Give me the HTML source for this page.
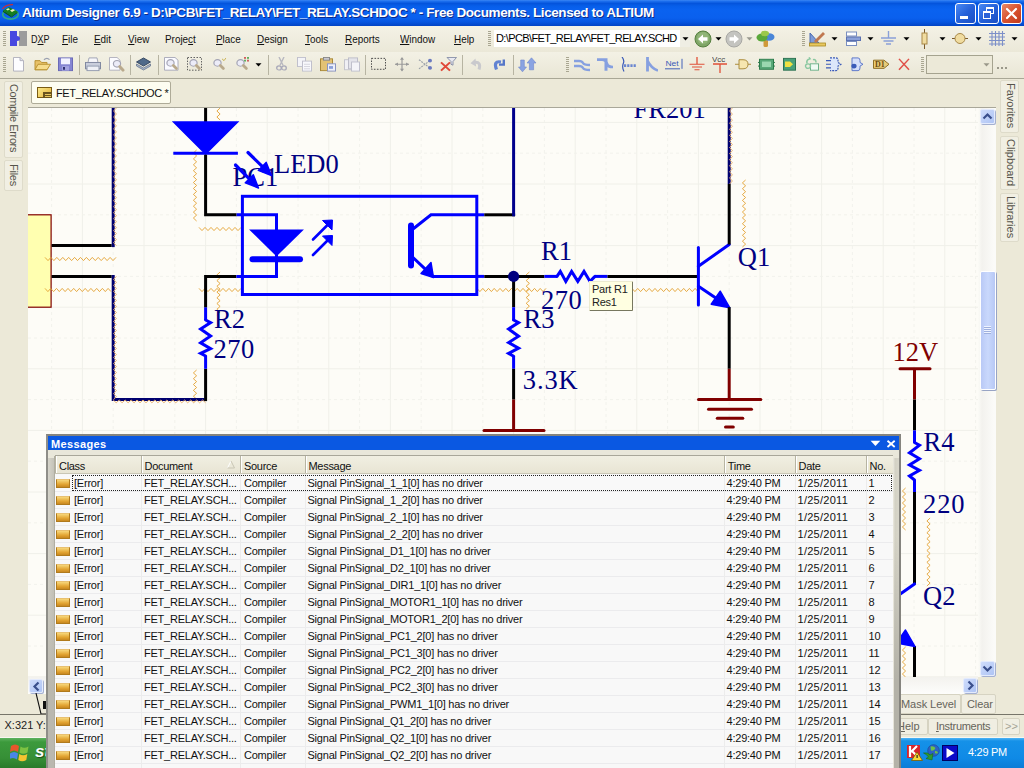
<!DOCTYPE html>
<html>
<head>
<meta charset="utf-8">
<title>Altium Designer</title>
<style>
*{box-sizing:border-box;margin:0;padding:0}
html,body{width:1024px;height:768px;overflow:hidden;background:#ece9d8;font-family:"Liberation Sans",sans-serif;font-size:11px;color:#000}
.abs{position:absolute}
#titlebar{position:absolute;left:0;top:0;width:1024px;height:26px;background:linear-gradient(to bottom,#3a86f4 0px,#1a6cec 1.5px,#0454dc 3.5px,#075ee9 6px,#0a62f0 10px,#0a60ee 18px,#0656e0 22px,#0244c4 26px)}
#titletext{position:absolute;left:22px;top:5px;color:#fff;font-weight:bold;font-size:13.5px;letter-spacing:-0.41px;white-space:pre;text-shadow:1px 1px 0 #0a2a8a}
.tbtn{position:absolute;top:3px;width:21px;height:21px;border:1px solid #fff;border-radius:3px;background:linear-gradient(135deg,#4a8af4 0%,#2561d9 50%,#1a4fc4 100%)}
#menubar{position:absolute;left:0;top:26px;width:1024px;height:26px;background:linear-gradient(to bottom,#f4f2e6,#ebe8d8)}
.mi{position:absolute;top:6.5px;font-size:11px;white-space:pre;color:#111;transform-origin:0 0;transform:scaleX(0.9)}
.mi u{text-decoration:underline}
#toolbar{position:absolute;left:0;top:52px;width:1024px;height:26px;background:linear-gradient(to bottom,#f3f1e5,#e9e6d5)}
.grip{position:absolute;width:3px;height:16px;background:repeating-linear-gradient(to bottom,#a9a691 0,#a9a691 1px,transparent 1px,transparent 2px)}
.sep{position:absolute;width:1px;height:20px;background:#b5b2a0;top:55px}
#tabrow{position:absolute;left:0;top:78px;width:1024px;height:30px;background:#ece9d8;border-top:1px solid #a9a796}
#doctab{position:absolute;left:31px;top:81px;width:140px;height:23px;background:#fdfdf0;border:1px solid #aeab98;border-radius:2px}
#doctab span{position:absolute;left:24px;top:4.5px;font-size:11px;letter-spacing:-0.35px;white-space:pre;color:#111}
.vtab{position:absolute;background:#f1efe3;border:1px solid #dedbca;border-radius:2px}
.vtab span{position:absolute;margin-top:-1px;white-space:pre;font-size:11px;color:#55534a;transform-origin:0 0;transform:rotate(90deg)}
#sch{position:absolute;left:28px;top:108px;width:950px;height:569px;background:#fdfcf7;overflow:hidden}
#vscroll{position:absolute;left:978px;top:108px;width:18px;height:569px;background:linear-gradient(to right,#fcfcf7 0,#f3f2ee 4px,#fbfbf8 16px)}
#hscroll{position:absolute;left:28px;top:677px;width:950px;height:17px;background:linear-gradient(to bottom,#f3f2ee,#fdfdfb)}
.sbtn{position:absolute;width:15px;height:15px;border:1px solid #e4ebfd;border-radius:2px;background:linear-gradient(135deg,#cfdcfb,#aec4f4);box-shadow:1px 1px 0 #a4b0d0}
#msg{position:absolute;left:46px;top:434px;width:855px;height:340px;background:#e9e7da;border:2px solid #85847e;border-left-color:#8f8e88}
#msg .ml{position:absolute;left:0;top:22px;width:7px;height:320px;background:linear-gradient(to right,#d6d4ca,#c2c0b6)}
#msg .ml2{position:absolute;left:0;top:120px;width:7px;height:220px;background:linear-gradient(to bottom,rgba(186,184,175,0),rgba(186,184,175,1) 60%)}
#msg .mr{position:absolute;left:845px;top:22px;width:6px;height:320px;background:linear-gradient(to right,#eceae0 0,#d3d1c4 35%,#d8d6ca 100%)}
#msg .mr2{position:absolute;left:845.5px;top:100px;width:5.5px;height:240px;background:linear-gradient(to bottom,rgba(180,178,168,0),rgba(180,178,168,1) 60%)}
#msgtitle{position:absolute;left:0;top:0;width:851px;height:14px;background:#0a58e2;color:#fff;font-weight:bold;font-size:11px}
#msgtitle span{position:absolute;left:3px;top:1.5px;letter-spacing:0.35px;line-height:12px}
#list{position:absolute;left:7px;top:20px;width:838px;height:320px;background:#f8f8f8;overflow:hidden;box-shadow:0 -1px 0 #a9a79a,-1px 0 0 #b0aea2}
#lhead{position:absolute;left:0;top:0;width:838px;height:18px;background:linear-gradient(to bottom,#f1efe2,#e8e5d4);border-bottom:1px solid #c9c6b5}
.hc{position:absolute;top:0;height:17px;border-left:1px solid #b7b4a2;box-shadow:inset 1px 0 0 #fff;padding:3.5px 0 0 3px;font-size:11px;letter-spacing:-0.3px;white-space:pre;color:#111}
.row{position:absolute;left:0;width:838px;height:17px;border-bottom:1px solid #ebebed;background:#f8f8f8}
.row.alt{background:#f8f8f8}
.row.first{background:#f9f9f9}
.c{position:absolute;top:1.5px;white-space:pre;font-size:11px;letter-spacing:-0.22px;color:#111}
.c.d{letter-spacing:0.27px}
.ico{position:absolute;left:0.5px;top:4px;width:14px;height:9px;background:linear-gradient(to bottom,#f7d77a,#e3a533 60%,#c88820);border:1px solid #b07a1c;border-top-color:#e8c070}
.cl{position:absolute;top:0;width:1px;height:400px;background:#ececec}
#statusbar{position:absolute;left:0;top:715px;width:1024px;height:23px;background:#ece9d8;border-bottom:1px solid #f8f7f0}
#taskbar{position:absolute;left:0;top:738px;width:1024px;height:30px;background:linear-gradient(to bottom,#3a80f0 0,#245edb 3px,#2663e0 20px,#1c4fc0 30px)}
#tray{position:absolute;left:890px;top:738px;width:134px;height:30px;background:linear-gradient(to bottom,#4fb4f5 0,#1591e8 3px,#0f8ae6 20px,#0c7cd6 30px)}
#start{position:absolute;left:0;top:738px;width:97px;height:30px;background:linear-gradient(to bottom,#5fb25f 0,#3c9a3c 4px,#368f36 20px,#2a7a2a 30px);border-radius:0 12px 12px 0}
.pbtn{position:absolute;border:1px solid #d6d3c2;border-radius:2px;background:#f0eee2;color:#66645a;font-size:11px;white-space:pre}
</style>
</head>
<body>
<!-- TITLE BAR -->
<div id="titlebar">
  <svg class="abs" style="left:1px;top:3px" width="19" height="18" viewBox="0 0 19 18"><ellipse cx="9.5" cy="11.5" rx="7.8" ry="4.6" fill="none" stroke="#2fa98c" stroke-width="1.6"/><path d="M1.5 6 Q4 1.5 12 1.6" stroke="#c8303a" stroke-width="1.4" fill="none"/><path d="M2 7.5 L8 4 L16.5 8.5 L10.5 13 Z" fill="#17801e"/><path d="M2 7.5 L10.5 13 L10.5 14.6 L2 9 Z" fill="#0c5a14"/><path d="M10.5 13 L16.5 8.5 L16.5 10 L10.5 14.6 Z" fill="#0e6616"/><path d="M5 6.3 L7.3 5.2 L9 6.2 L6.7 7.4 Z" fill="#dff0c0"/><path d="M9 7.4 L12 6 L14 7.3 L11 8.9 Z" fill="#f0f0b8"/></svg>
  <div id="titletext">Altium Designer 6.9 - D:\PCB\FET_RELAY\FET_RELAY.SCHDOC * - Free Documents. Licensed to ALTIUM</div>
  <div class="tbtn" style="left:955px"><div class="abs" style="left:4px;top:12px;width:8px;height:3px;background:#fff"></div></div>
  <div class="tbtn" style="left:978px"><div class="abs" style="left:7px;top:3px;width:8px;height:7px;border:1px solid #fff;border-top-width:2px"></div><div class="abs" style="left:4px;top:7px;width:8px;height:8px;border:1px solid #fff;border-top-width:2px;background:#2a62d8"></div></div>
  <div class="tbtn" style="left:1001px;background:linear-gradient(135deg,#e88a6a 0%,#d9532f 50%,#c03a1c 100%)"><svg class="abs" style="left:3px;top:3px" width="13" height="13" viewBox="0 0 13 13"><path d="M2 2 L11 11 M11 2 L2 11" stroke="#fff" stroke-width="2.2" stroke-linecap="round"/></svg></div>
</div>

<!-- MENU BAR -->
<div id="menubar">
<div class="grip" style="left:3px;top:5px"></div>
<svg class="abs" style="left:10px;top:5px" width="17" height="15" viewBox="0 0 17 15"><rect x="9" y="0" width="8" height="15" fill="#9c9c9c"/><path d="M0 0 H7 V5 Q10 5 10 7.5 Q10 10 7 10 V15 H0 Z" fill="#4848e0"/></svg>
<div class="mi" style="left:30.5px;transform:scaleX(0.82)">D<u>X</u>P</div>
<div class="mi" style="left:61.5px"><u>F</u>ile</div>
<div class="mi" style="left:93.8px"><u>E</u>dit</div>
<div class="mi" style="left:128px"><u>V</u>iew</div>
<div class="mi" style="left:165.3px">Proje<u>c</u>t</div>
<div class="mi" style="left:215.5px"><u>P</u>lace</div>
<div class="mi" style="left:256.5px"><u>D</u>esign</div>
<div class="mi" style="left:304.7px"><u>T</u>ools</div>
<div class="mi" style="left:345.3px"><u>R</u>eports</div>
<div class="mi" style="left:399.5px"><u>W</u>indow</div>
<div class="mi" style="left:453.5px"><u>H</u>elp</div>
<div class="grip" style="left:488px;top:5px"></div>
<div class="abs" style="left:494px;top:4px;width:196px;height:17px;background:#fff"><span class="abs" style="left:2px;top:2px;font-size:11px;white-space:pre;letter-spacing:-0.62px" id="pathtxt">D:\PCB\FET_RELAY\FET_RELAY.SCHD</span><div class="abs" style="left:186px;top:0;width:10px;height:17px;background:#efeee4"></div></div>
<svg class="abs" style="left:682px;top:11px" width="7" height="4" viewBox="0 0 7 4"><path d="M0.5 0.3 H6.5 L3.5 3.6 Z" fill="#000"/></svg>
<svg class="abs" style="left:694px;top:4px" width="18" height="18" viewBox="0 0 18 18"><circle cx="9" cy="9" r="8" fill="#7fa567" stroke="#56803f" stroke-width="1"/><circle cx="9" cy="8" r="6" fill="#9cc084" opacity=".6"/><path d="M4 9 L9 4.5 V7.3 H13.5 V10.7 H9 V13.5 Z" fill="#fff"/></svg>
<svg class="abs" style="left:715px;top:11px" width="7" height="4" viewBox="0 0 7 4"><path d="M0.5 0.3 H6.5 L3.5 3.6 Z" fill="#000"/></svg>
<svg class="abs" style="left:725px;top:4px" width="18" height="18" viewBox="0 0 18 18"><circle cx="9" cy="9" r="8" fill="#c4c4c0" stroke="#a8a8a4" stroke-width="1"/><path d="M14 9 L9 4.5 V7.3 H4.5 V10.7 H9 V13.5 Z" fill="#fff"/></svg>
<svg class="abs" style="left:746px;top:11px" width="7" height="4" viewBox="0 0 7 4"><path d="M0.5 0.3 H6.5 L3.5 3.6 Z" fill="#9a9a90"/></svg>
<svg class="abs" style="left:756px;top:4px" width="19" height="18" viewBox="0 0 19 18"><rect x="7.5" y="9" width="4.5" height="8" rx="1.5" fill="#d09a3a"/><ellipse cx="13" cy="7" rx="5.5" ry="3.8" fill="#4a86d8"/><ellipse cx="6" cy="7.5" rx="5.5" ry="4" fill="#5aa83a"/><ellipse cx="9" cy="3.5" rx="4" ry="2.8" fill="#9ac84a"/></svg>
<div class="grip" style="left:802px;top:5px"></div>
<svg class="abs" style="left:809px;top:4px" width="17" height="17" viewBox="0 0 17 17"><path d="M1 13 L1 3 L10 13 Z" fill="#7d9bd8" stroke="#4a6ab0" stroke-width="1"/><rect x="0.5" y="13" width="16" height="3" fill="#e8c860" stroke="#a88820" stroke-width=".8"/><path d="M5 11 L14 2 L16 4 L7 13 Z" fill="#c07850"/></svg>
<svg class="abs" style="left:831px;top:11px" width="7" height="4" viewBox="0 0 7 4"><path d="M0.5 0.3 H6.5 L3.5 3.6 Z" fill="#000"/></svg>
<svg class="abs" style="left:846px;top:5px" width="15" height="15" viewBox="0 0 15 15"><rect x="0.5" y="1" width="10" height="4" fill="#fff" stroke="#7a8fc0"/><rect x="0.5" y="6" width="14" height="3.5" fill="#8aa0d8" stroke="#5a70b0"/><rect x="0.5" y="10.5" width="10" height="4" fill="#fff" stroke="#7a8fc0"/></svg>
<svg class="abs" style="left:867px;top:11px" width="7" height="4" viewBox="0 0 7 4"><path d="M0.5 0.3 H6.5 L3.5 3.6 Z" fill="#000"/></svg>
<svg class="abs" style="left:881px;top:4px" width="15" height="17" viewBox="0 0 15 17"><path d="M7.5 1 V8 M0 8 H15 M2.5 11 H12.5 M5 14 H10" stroke="#8aa0d8" stroke-width="1.4" fill="none"/></svg>
<svg class="abs" style="left:903px;top:11px" width="7" height="4" viewBox="0 0 7 4"><path d="M0.5 0.3 H6.5 L3.5 3.6 Z" fill="#000"/></svg>
<svg class="abs" style="left:920px;top:3px" width="9" height="20" viewBox="0 0 9 20"><path d="M4.5 0 V20" stroke="#7a5a2a" stroke-width="1"/><rect x="2" y="4" width="5" height="11" fill="#f0dca0" stroke="#a88848" stroke-width="1"/></svg>
<svg class="abs" style="left:939px;top:11px" width="7" height="4" viewBox="0 0 7 4"><path d="M0.5 0.3 H6.5 L3.5 3.6 Z" fill="#000"/></svg>
<svg class="abs" style="left:952px;top:5px" width="16" height="15" viewBox="0 0 16 15"><path d="M0 7.5 H16" stroke="#7a5a2a" stroke-width="1"/><circle cx="8" cy="7.5" r="5" fill="#f0dca0" stroke="#a88848" stroke-width="1"/></svg>
<svg class="abs" style="left:975px;top:11px" width="7" height="4" viewBox="0 0 7 4"><path d="M0.5 0.3 H6.5 L3.5 3.6 Z" fill="#000"/></svg>
<svg class="abs" style="left:989px;top:5px" width="16" height="15" viewBox="0 0 16 15"><path d="M3 0 V15 M6.5 0 V15 M10 0 V15 M13.5 0 V15 M0 2.5 H16 M0 6 H16 M0 9.5 H16 M0 13 H16" stroke="#7d90c8" stroke-width="1.1"/></svg>
<svg class="abs" style="left:1011px;top:11px" width="7" height="4" viewBox="0 0 7 4"><path d="M0.5 0.3 H6.5 L3.5 3.6 Z" fill="#000"/></svg>
</div>
<!-- TOOLBAR -->
<div id="toolbar">
<div class="grip" style="left:3px;top:5px"></div>
<svg class="abs" style="left:13px;top:5.4px" width="11" height="14.56" viewBox="0 0 11 16" preserveAspectRatio="none"><path d="M0.5 0.5 H7 L10.5 4 V15.5 H0.5 Z" fill="#fdfdff" stroke="#b0b0bc"/><path d="M7 0.5 V4 H10.5" fill="#e0e0ea" stroke="#b0b0bc"/></svg>
<svg class="abs" style="left:34px;top:5.4px" width="17" height="14.56" viewBox="0 0 17 16" preserveAspectRatio="none"><path d="M1 4 H6 L7.5 6 H13 V14 H1 Z" fill="#e8c26a" stroke="#b89030"/><path d="M1 14 L4 8 H16.5 L13 14 Z" fill="#f6dc8c" stroke="#b89030"/><path d="M10 3 Q13 0 15.5 3" stroke="#9aa0b0" fill="none" stroke-width="1.3"/></svg>
<svg class="abs" style="left:58px;top:5.4px" width="15" height="14.56" viewBox="0 0 15 16" preserveAspectRatio="none"><rect x="0.5" y="1" width="14" height="14" fill="#8686d2" stroke="#6a6ab8"/><rect x="3" y="1.5" width="9" height="6.5" fill="#f4f4ff"/><rect x="4" y="10" width="7" height="5" fill="#a4a4e0"/><rect x="5" y="11" width="2" height="3" fill="#303070"/></svg>
<div class="abs" style="left:79px;top:3px;width:1px;height:20px;background:#b7b4a2"></div>
<svg class="abs" style="left:85px;top:5.4px" width="16" height="14.56" viewBox="0 0 16 16" preserveAspectRatio="none"><path d="M4 1 H12 L13 6 H3 Z" fill="#f6f6fa" stroke="#a0a4b4"/><rect x="0.5" y="6" width="15" height="7" fill="#c9cedc" stroke="#8088a0"/><rect x="2" y="10" width="12" height="5" fill="#eef0f6" stroke="#9098ac"/></svg>
<svg class="abs" style="left:109px;top:5.4px" width="16" height="14.56" viewBox="0 0 16 16" preserveAspectRatio="none"><path d="M0.5 0.5 H8 L11 3.5 V14.5 H0.5 Z" fill="#fbfbff" stroke="#b0b0bc"/><circle cx="8" cy="7.5" r="3.6" fill="#ececf8" stroke="#a4a4b4" stroke-width="1.2"/><path d="M10.8 10.5 L14 14.5" stroke="#b9a98c" stroke-width="3" stroke-linecap="round"/></svg>
<div class="abs" style="left:130px;top:3px;width:1px;height:20px;background:#b7b4a2"></div>
<svg class="abs" style="left:136px;top:4px" width="15" height="16" viewBox="0 0 15 16" preserveAspectRatio="none"><path d="M7.5 2 L14.5 6 L7.5 10 L0.5 6 Z" fill="#506a8a" stroke="#384a64"/><path d="M0.5 8 L7.5 12 L14.5 8 V10 L7.5 14 L0.5 10 Z" fill="#a8b4c8" stroke="#6a7890" stroke-width=".8"/></svg>
<div class="abs" style="left:158px;top:3px;width:1px;height:20px;background:#b7b4a2"></div>
<svg class="abs" style="left:164px;top:5.4px" width="15" height="14.56" viewBox="0 0 15 16" preserveAspectRatio="none"><path d="M0.5 0.5 H11 L14 3.5 V14.5 H0.5 Z" fill="#fafaff" stroke="#a8a8b8"/><circle cx="6.5" cy="6.5" r="3.6" fill="#ececf8" stroke="#a4a4b4" stroke-width="1.2"/><path d="M9.3 9.3 L12.3 12.6" stroke="#b9a98c" stroke-width="3" stroke-linecap="round"/></svg>
<svg class="abs" style="left:187px;top:5.4px" width="15" height="14.56" viewBox="0 0 15 16" preserveAspectRatio="none"><rect x="0.5" y="0.5" width="14" height="14" fill="none" stroke="#555" stroke-dasharray="1.5 1.5"/><circle cx="6.5" cy="6.5" r="3.6" fill="#ececf8" stroke="#a4a4b4" stroke-width="1.2"/><path d="M9.3 9.3 L12.3 12.6" stroke="#b9a98c" stroke-width="3" stroke-linecap="round"/></svg>
<svg class="abs" style="left:211px;top:5.4px" width="15" height="14.56" viewBox="0 0 15 16" preserveAspectRatio="none"><path d="M11 2 L13 4 L15 1" stroke="#c8b050" fill="none"/><circle cx="6.5" cy="6.5" r="3.6" fill="#ececf8" stroke="#a4a4b4" stroke-width="1.2"/><path d="M9.3 9.3 L12.3 12.6" stroke="#b9a98c" stroke-width="3" stroke-linecap="round"/></svg>
<svg class="abs" style="left:234px;top:5.4px" width="16" height="14.56" viewBox="0 0 16 16" preserveAspectRatio="none"><rect x="10" y="0" width="2" height="2" fill="#d06060"/><rect x="13" y="0" width="2" height="2" fill="#60b060"/><rect x="10" y="3" width="2" height="2" fill="#60b060"/><rect x="13" y="3" width="2" height="2" fill="#d06060"/><circle cx="6.5" cy="6.5" r="3.6" fill="#ececf8" stroke="#a4a4b4" stroke-width="1.2"/><path d="M9.3 9.3 L12.3 12.6" stroke="#b9a98c" stroke-width="3" stroke-linecap="round"/></svg>
<svg class="abs" style="left:255px;top:11px" width="7" height="4" viewBox="0 0 7 4"><path d="M0.5 0.3 H6.5 L3.5 3.6 Z" fill="#000"/></svg>
<div class="abs" style="left:268px;top:3px;width:1px;height:20px;background:#b7b4a2"></div>
<svg class="abs" style="left:276px;top:5.4px" width="11" height="14.56" viewBox="0 0 11 16" preserveAspectRatio="none"><path d="M3 0 L7 9 M8 0 L4 9" stroke="#b8b8c0" stroke-width="1.4"/><circle cx="3" cy="12" r="2.3" fill="none" stroke="#a8a8b8" stroke-width="1.3"/><circle cx="8" cy="12" r="2.3" fill="none" stroke="#a8a8b8" stroke-width="1.3"/></svg>
<svg class="abs" style="left:297px;top:5.4px" width="15" height="14.56" viewBox="0 0 15 16" preserveAspectRatio="none"><rect x="0.5" y="0.5" width="8" height="10" fill="#f4f4f8" stroke="#c0c0cc"/><rect x="5.5" y="4.5" width="9" height="11" fill="#f8f8fc" stroke="#c0c0cc"/><path d="M7 8 H13 M7 10.5 H13 M7 13 H13" stroke="#d4d4dc"/></svg>
<svg class="abs" style="left:320px;top:5.4px" width="16" height="14.56" viewBox="0 0 16 16" preserveAspectRatio="none"><rect x="0.5" y="2" width="12" height="13" fill="#e3c274" stroke="#a88838"/><rect x="3.5" y="0.5" width="6" height="3" fill="#c8c8d0" stroke="#888"/><rect x="7.5" y="7.5" width="8" height="8" fill="#eef0fa" stroke="#8a94c0"/><rect x="9" y="10" width="4" height="3" fill="#8aa0d8"/></svg>
<svg class="abs" style="left:344px;top:5.4px" width="16" height="14.56" viewBox="0 0 16 16" preserveAspectRatio="none"><rect x="0.5" y="3" width="9" height="11" fill="#f0f0f4" stroke="#c4c4cc"/><rect x="4.5" y="1" width="9" height="12" fill="#e4e4ea" stroke="#bcbcc8"/><rect x="7.5" y="5.5" width="8" height="10" fill="#f4f4f8" stroke="#c0c0cc"/></svg>
<div class="abs" style="left:365px;top:3px;width:1px;height:20px;background:#b7b4a2"></div>
<svg class="abs" style="left:371px;top:5.4px" width="16" height="14.56" viewBox="0 0 16 16" preserveAspectRatio="none"><rect x="0.5" y="1.5" width="14" height="12" fill="none" stroke="#444" stroke-dasharray="1.6 1.4"/></svg>
<svg class="abs" style="left:395px;top:5.4px" width="14" height="14.56" viewBox="0 0 14 16" preserveAspectRatio="none"><path d="M7 1 V15 M0 8 H14" stroke="#9a9a9a" stroke-width="1.2"/><path d="M7 0 L5 3 H9 Z M7 16 L5 13 H9 Z M0 8 L3 6 V10 Z M14 8 L11 6 V10 Z" fill="#9a9a9a"/></svg>
<svg class="abs" style="left:418px;top:5.4px" width="15" height="14.56" viewBox="0 0 15 16" preserveAspectRatio="none"><path d="M1 3 L13 13 M1 13 L13 3" stroke="#9aa0a8" stroke-width="1.2" stroke-dasharray="2 1"/><circle cx="12" cy="4" r="2" fill="#6a7ac0"/><circle cx="12" cy="12" r="2" fill="#6a7ac0"/></svg>
<svg class="abs" style="left:440px;top:5.4px" width="17" height="14.56" viewBox="0 0 17 16" preserveAspectRatio="none"><path d="M1 6 L10 15 M10 6 L1 15" stroke="#e04838" stroke-width="2"/><path d="M7 0.5 H16.5 L13 5 V9 L11 8 V5 Z" fill="#e8e8f0" stroke="#8890a8"/></svg>
<div class="abs" style="left:462px;top:3px;width:1px;height:20px;background:#b7b4a2"></div>
<svg class="abs" style="left:470px;top:4.8px" width="12" height="14" viewBox="0 0 12 14" preserveAspectRatio="none"><path d="M9 12.5 Q11.5 4.5 4.5 5.2" stroke="#c9c9cd" stroke-width="3" fill="none"/><path d="M0.5 6.2 L5.5 1.5 L6 9.5 Z" fill="#c9c9cd"/></svg>
<svg class="abs" style="left:492px;top:4.8px" width="14" height="14" viewBox="0 0 14 14" preserveAspectRatio="none"><path d="M4.5 12.5 Q1 3.5 9 5" stroke="#6283d2" stroke-width="3.2" fill="none"/><path d="M7 8.8 H13 V2.5 L10.6 2.5 L10.6 6.4 H7 Z" fill="#5677c8"/></svg>
<div class="abs" style="left:513px;top:3px;width:1px;height:20px;background:#b7b4a2"></div>
<svg class="abs" style="left:518px;top:3.8px" width="19" height="16" viewBox="0 0 19 16" preserveAspectRatio="none"><path d="M4.5 15.8 L0.5 11 H2.7 V4 H6.3 V11 H8.5 Z" fill="#8aa3e2" stroke="#6f86cc" stroke-width=".6"/><path d="M13.5 1.8 L18 7 H15.6 V13.8 H11.4 V7 H9 Z" fill="#8aa3e2" stroke="#6f86cc" stroke-width=".6"/></svg>
<div class="grip" style="left:566px;top:5px"></div>
<svg class="abs" style="left:574px;top:4px" width="16" height="16" viewBox="0 0 16 16" preserveAspectRatio="none"><path d="M0 5 H5 Q8 5 9 7 Q10 9 16 9 M0 10 H5 Q8 10 9 12 Q10 14 16 14" stroke="#86a0e0" stroke-width="2.3" fill="none"/></svg>
<svg class="abs" style="left:597px;top:5.4px" width="16" height="14.56" viewBox="0 0 16 16" preserveAspectRatio="none"><path d="M0 3 H9 V15 M5 3 Q9 3 10 8 Q11 11 16 11" stroke="#86a0e0" stroke-width="3" fill="none"/></svg>
<svg class="abs" style="left:620px;top:5.4px" width="16" height="14.56" viewBox="0 0 16 16" preserveAspectRatio="none"><path d="M2 0 Q5 4 3 8 Q2 12 4 16" stroke="#3a5ab8" stroke-width="1.2" fill="none"/><path d="M4 9.5 H16" stroke="#6a86d0" stroke-width="3" stroke-dasharray="2.2 1"/></svg>
<svg class="abs" style="left:645px;top:5.4px" width="13" height="14.56" viewBox="0 0 13 16" preserveAspectRatio="none"><path d="M2.5 0 V16 M2.5 4 Q6 12 13 15" stroke="#86a0e0" stroke-width="2.8" fill="none"/></svg>
<svg class="abs" style="left:665px;top:5.4px" width="18" height="14.56" viewBox="0 0 18 16" preserveAspectRatio="none"><text x="0.5" y="10" font-family="Liberation Sans" font-size="8.5" fill="#3a5ab8">Net</text><path d="M0 13 H15 M17 2 V13" stroke="#3a5ab8" stroke-width="1"/></svg>
<svg class="abs" style="left:689px;top:5.4px" width="16" height="14.56" viewBox="0 0 16 16" preserveAspectRatio="none"><path d="M8 0 V8 M0.5 8 H15.5 M3 11 H13 M5.5 14 H10.5" stroke="#e05038" stroke-width="1.3" fill="none"/></svg>
<svg class="abs" style="left:712px;top:3px" width="16" height="19" viewBox="0 0 16 19" preserveAspectRatio="none"><text x="0" y="6.5" font-family="Liberation Sans" font-size="8" fill="#444">Vcc</text><path d="M1 9 H15 M8 9 V18" stroke="#e05038" stroke-width="1.3"/></svg>
<svg class="abs" style="left:735px;top:5.4px" width="16" height="14.56" viewBox="0 0 16 16" preserveAspectRatio="none"><path d="M0 8 H4 M12 8 H16" stroke="#a88838" stroke-width="1"/><path d="M4 3 H8 Q13 3 13 8 Q13 13 8 13 H4 Z" fill="#f6e6b0" stroke="#a88838"/></svg>
<svg class="abs" style="left:758px;top:5.4px" width="17" height="14.56" viewBox="0 0 17 16" preserveAspectRatio="none"><rect x="1.5" y="2.5" width="14" height="11" fill="#58a878" stroke="#2a7a4a"/><rect x="4" y="5" width="9" height="6" fill="#9ad8b0"/><path d="M0 6 H2 M0 10 H2 M15 6 H17 M15 10 H17" stroke="#2a7a4a"/></svg>
<svg class="abs" style="left:783px;top:5.4px" width="13" height="14.56" viewBox="0 0 13 16" preserveAspectRatio="none"><rect x="0.5" y="1.5" width="12" height="13" fill="#48a078" stroke="#2a7050"/><path d="M2 5 H7 L10 8 L7 11 H2 Z" fill="#f0e040"/></svg>
<svg class="abs" style="left:804px;top:5.4px" width="15" height="14.56" viewBox="0 0 15 16" preserveAspectRatio="none"><path d="M3 7 Q2 3 6 2 L5 0.5 M9 3 Q12 2 12 6" stroke="#8ac8a0" stroke-width="1.6" fill="none"/><rect x="6.5" y="7.5" width="8" height="7" fill="#f0faf4" stroke="#6ab088"/><circle cx="4" cy="10" r="2.5" fill="none" stroke="#8ac8a0" stroke-width="1.4"/></svg>
<svg class="abs" style="left:826px;top:5.4px" width="16" height="14.56" viewBox="0 0 16 16" preserveAspectRatio="none"><path d="M4 1 H10 Q12 1 12 4 V6 L15 8 L12 10 V12 Q12 15 10 15 H4" fill="#dce6fa" stroke="#3a5ab8" stroke-width="1.2" stroke-dasharray="2 1"/><path d="M0 4 H5 M0 8 H5 M0 12 H5" stroke="#3a5ab8" stroke-width="1.3"/></svg>
<svg class="abs" style="left:850px;top:5.4px" width="14" height="14.56" viewBox="0 0 14 16" preserveAspectRatio="none"><path d="M2 1 H8 Q10 1 10 4 V6 L13 8 L10 10 V12 Q10 15 8 15 H2 Z" fill="#d4defa" stroke="#5a76c8" stroke-width="1"/><circle cx="4" cy="10" r="2.6" fill="#3a5ab8"/></svg>
<svg class="abs" style="left:873px;top:5.4px" width="17" height="14.56" viewBox="0 0 17 16" preserveAspectRatio="none"><path d="M0.5 3.5 H11 L16 8 L11 12.5 H0.5 Z" fill="#e8cc78" stroke="#8a6a20"/><text x="2" y="11" font-family="Liberation Serif" font-size="8" font-weight="bold" fill="#6a4a10">D1</text></svg>
<svg class="abs" style="left:898px;top:5.4px" width="12" height="14.56" viewBox="0 0 12 16" preserveAspectRatio="none"><path d="M1 2 L11 14 M11 2 L1 14" stroke="#e05048" stroke-width="1.5"/></svg>
<div class="grip" style="left:921px;top:5px"></div>
<div class="abs" style="left:926px;top:3px;width:67px;height:19px;border:1px solid #a5a38f;background:#ece9d8"></div>
<svg class="abs" style="left:983px;top:11px" width="7" height="4" viewBox="0 0 7 4"><path d="M0.5 0.3 H6.5 L3.5 3.6 Z" fill="#9a988a"/></svg>
<div class="abs" style="left:997px;top:15px;width:2px;height:2px;background:#9a988a;box-shadow:4px 0 0 #9a988a,8px 0 0 #9a988a"></div>
</div>
<!-- TAB ROW -->
<div id="tabrow"></div>
<div id="doctab"><div class="abs" style="left:5px;top:5px;width:15px;height:11px;background:linear-gradient(135deg,#fbe98a,#e4b43c);border:1px solid #7a5c14"></div><div class="abs" style="left:11px;top:10px;width:9px;height:6px;background:#6a5420"></div><div class="abs" style="left:13px;top:11.5px;width:6px;height:1px;background:#e8c860;box-shadow:0 2px 0 #e8c860"></div><span>FET_RELAY.SCHDOC *</span></div>

<!-- SIDE PANELS -->
<div class="vtab" style="left:4px;top:81px;width:19px;height:77px"><span style="left:15px;top:3px;letter-spacing:-0.38px">Compile Errors</span></div>
<div class="vtab" style="left:4px;top:160px;width:19px;height:31px"><span style="left:15px;top:4px;letter-spacing:-0.25px">Files</span></div>
<div class="vtab" style="left:1000px;top:80px;width:19px;height:53px"><span style="left:16px;top:3px">Favorites</span></div>
<div class="vtab" style="left:1000px;top:136px;width:19px;height:54px"><span style="left:16px;top:3px">Clipboard</span></div>
<div class="vtab" style="left:1000px;top:193px;width:19px;height:49px"><span style="left:16px;top:3px">Libraries</span></div>

<!-- SCHEMATIC -->
<div class="abs" style="left:28px;top:107px;width:968px;height:1px;background:#a9a799"></div>
<div id="sch">
<svg id="schsvg" class="abs" style="left:0;top:0" width="950" height="569" viewBox="28 108 950 569">
<line x1="51.6" y1="108" x2="51.6" y2="677" stroke="#f2f2ec" stroke-width="1" stroke-dasharray="3 3"/>
<line x1="82.4" y1="108" x2="82.4" y2="677" stroke="#f0f0e9" stroke-width="1"/>
<line x1="113.2" y1="108" x2="113.2" y2="677" stroke="#f2f2ec" stroke-width="1" stroke-dasharray="3 3"/>
<line x1="144.0" y1="108" x2="144.0" y2="677" stroke="#f0f0e9" stroke-width="1"/>
<line x1="174.8" y1="108" x2="174.8" y2="677" stroke="#f2f2ec" stroke-width="1" stroke-dasharray="3 3"/>
<line x1="205.6" y1="108" x2="205.6" y2="677" stroke="#f0f0e9" stroke-width="1"/>
<line x1="236.4" y1="108" x2="236.4" y2="677" stroke="#f2f2ec" stroke-width="1" stroke-dasharray="3 3"/>
<line x1="267.2" y1="108" x2="267.2" y2="677" stroke="#f0f0e9" stroke-width="1"/>
<line x1="298.0" y1="108" x2="298.0" y2="677" stroke="#f2f2ec" stroke-width="1" stroke-dasharray="3 3"/>
<line x1="328.8" y1="108" x2="328.8" y2="677" stroke="#f0f0e9" stroke-width="1"/>
<line x1="359.6" y1="108" x2="359.6" y2="677" stroke="#f2f2ec" stroke-width="1" stroke-dasharray="3 3"/>
<line x1="390.4" y1="108" x2="390.4" y2="677" stroke="#f0f0e9" stroke-width="1"/>
<line x1="421.2" y1="108" x2="421.2" y2="677" stroke="#f2f2ec" stroke-width="1" stroke-dasharray="3 3"/>
<line x1="452.0" y1="108" x2="452.0" y2="677" stroke="#f0f0e9" stroke-width="1"/>
<line x1="482.8" y1="108" x2="482.8" y2="677" stroke="#f2f2ec" stroke-width="1" stroke-dasharray="3 3"/>
<line x1="513.6" y1="108" x2="513.6" y2="677" stroke="#f0f0e9" stroke-width="1"/>
<line x1="544.4" y1="108" x2="544.4" y2="677" stroke="#f2f2ec" stroke-width="1" stroke-dasharray="3 3"/>
<line x1="575.2" y1="108" x2="575.2" y2="677" stroke="#f0f0e9" stroke-width="1"/>
<line x1="606.0" y1="108" x2="606.0" y2="677" stroke="#f2f2ec" stroke-width="1" stroke-dasharray="3 3"/>
<line x1="636.8" y1="108" x2="636.8" y2="677" stroke="#f0f0e9" stroke-width="1"/>
<line x1="667.6" y1="108" x2="667.6" y2="677" stroke="#f2f2ec" stroke-width="1" stroke-dasharray="3 3"/>
<line x1="698.4" y1="108" x2="698.4" y2="677" stroke="#f0f0e9" stroke-width="1"/>
<line x1="729.2" y1="108" x2="729.2" y2="677" stroke="#f2f2ec" stroke-width="1" stroke-dasharray="3 3"/>
<line x1="760.0" y1="108" x2="760.0" y2="677" stroke="#f0f0e9" stroke-width="1"/>
<line x1="790.8" y1="108" x2="790.8" y2="677" stroke="#f2f2ec" stroke-width="1" stroke-dasharray="3 3"/>
<line x1="821.6" y1="108" x2="821.6" y2="677" stroke="#f0f0e9" stroke-width="1"/>
<line x1="852.4" y1="108" x2="852.4" y2="677" stroke="#f2f2ec" stroke-width="1" stroke-dasharray="3 3"/>
<line x1="883.2" y1="108" x2="883.2" y2="677" stroke="#f0f0e9" stroke-width="1"/>
<line x1="914.0" y1="108" x2="914.0" y2="677" stroke="#f2f2ec" stroke-width="1" stroke-dasharray="3 3"/>
<line x1="944.8" y1="108" x2="944.8" y2="677" stroke="#f0f0e9" stroke-width="1"/>
<line x1="975.6" y1="108" x2="975.6" y2="677" stroke="#f2f2ec" stroke-width="1" stroke-dasharray="3 3"/>
<line x1="28" y1="122.4" x2="978" y2="122.4" stroke="#f0f0e9" stroke-width="1"/>
<line x1="28" y1="153.2" x2="978" y2="153.2" stroke="#f2f2ec" stroke-width="1" stroke-dasharray="3 3"/>
<line x1="28" y1="184.0" x2="978" y2="184.0" stroke="#f0f0e9" stroke-width="1"/>
<line x1="28" y1="214.8" x2="978" y2="214.8" stroke="#f2f2ec" stroke-width="1" stroke-dasharray="3 3"/>
<line x1="28" y1="245.6" x2="978" y2="245.6" stroke="#f0f0e9" stroke-width="1"/>
<line x1="28" y1="276.4" x2="978" y2="276.4" stroke="#f2f2ec" stroke-width="1" stroke-dasharray="3 3"/>
<line x1="28" y1="307.2" x2="978" y2="307.2" stroke="#f0f0e9" stroke-width="1"/>
<line x1="28" y1="338.0" x2="978" y2="338.0" stroke="#f2f2ec" stroke-width="1" stroke-dasharray="3 3"/>
<line x1="28" y1="368.8" x2="978" y2="368.8" stroke="#f0f0e9" stroke-width="1"/>
<line x1="28" y1="399.6" x2="978" y2="399.6" stroke="#f2f2ec" stroke-width="1" stroke-dasharray="3 3"/>
<line x1="28" y1="430.4" x2="978" y2="430.4" stroke="#f0f0e9" stroke-width="1"/>
<line x1="28" y1="461.2" x2="978" y2="461.2" stroke="#f2f2ec" stroke-width="1" stroke-dasharray="3 3"/>
<line x1="28" y1="492.0" x2="978" y2="492.0" stroke="#f0f0e9" stroke-width="1"/>
<line x1="28" y1="522.8" x2="978" y2="522.8" stroke="#f2f2ec" stroke-width="1" stroke-dasharray="3 3"/>
<line x1="28" y1="553.6" x2="978" y2="553.6" stroke="#f0f0e9" stroke-width="1"/>
<line x1="28" y1="584.4" x2="978" y2="584.4" stroke="#f2f2ec" stroke-width="1" stroke-dasharray="3 3"/>
<line x1="28" y1="615.2" x2="978" y2="615.2" stroke="#f0f0e9" stroke-width="1"/>
<line x1="28" y1="646.0" x2="978" y2="646.0" stroke="#f2f2ec" stroke-width="1" stroke-dasharray="3 3"/>
<line x1="28" y1="676.8" x2="978" y2="676.8" stroke="#f0f0e9" stroke-width="1"/>
<polyline points="196.6,150.0 193.4,153.0 196.6,155.9 193.4,158.9 196.6,161.8 193.4,164.8 196.6,167.8 193.4,170.7 196.6,173.7 193.4,176.6 196.6,179.6 193.4,182.5 196.6,185.5 193.4,188.5 196.6,191.4 193.4,194.4 196.6,197.3 193.4,200.3 196.6,203.2 193.4,206.2 196.6,209.2 193.4,212.1 196.6,215.1 193.4,218.0 196.6,221.0" fill="none" stroke="#e3a232" stroke-width="0.95" opacity="0.95"/>
<polyline points="199.0,227.4 202.0,230.6 205.0,227.4 208.0,230.6 211.0,227.4 214.0,230.6 217.0,227.4 220.0,230.6 223.0,227.4 226.0,230.6 229.0,227.4 232.0,230.6 235.0,227.4 238.0,230.6 241.0,227.4" fill="none" stroke="#e3a232" stroke-width="0.95" opacity="0.95"/>
<polyline points="220.1,108.0 216.9,111.0 220.1,114.0 216.9,117.0 220.1,120.0" fill="none" stroke="#e3a232" stroke-width="0.95" opacity="0.95"/>
<polyline points="220.1,272.0 216.9,274.9 220.1,277.7 216.9,280.6 220.1,283.5 216.9,286.3 220.1,289.2 216.9,292.1 220.1,294.9 216.9,297.8 220.1,300.7 216.9,303.5 220.1,306.4 216.9,309.3 220.1,312.1 216.9,315.0" fill="none" stroke="#e3a232" stroke-width="0.95" opacity="0.95"/>
<polyline points="199.0,288.4 202.0,291.6 205.0,288.4 208.0,291.6 211.0,288.4 214.0,291.6 217.0,288.4 220.0,291.6 223.0,288.4 226.0,291.6 229.0,288.4 232.0,291.6 235.0,288.4 238.0,291.6 241.0,288.4" fill="none" stroke="#e3a232" stroke-width="0.95" opacity="0.95"/>
<polyline points="196.6,370.0 193.4,372.9 196.6,375.8 193.4,378.7 196.6,381.6 193.4,384.5 196.6,387.5 193.4,390.4 196.6,393.3 193.4,396.2 196.6,399.1 193.4,402.0" fill="none" stroke="#e3a232" stroke-width="0.95" opacity="0.95"/>
<polyline points="477.0,288.4 479.9,291.6 482.8,288.4 485.6,291.6 488.5,288.4 491.4,291.6 494.2,288.4 497.1,291.6 500.0,288.4 502.9,291.6 505.8,288.4 508.6,291.6 511.5,288.4 514.4,291.6 517.2,288.4 520.1,291.6 523.0,288.4 525.9,291.6 528.8,288.4 531.6,291.6 534.5,288.4 537.4,291.6 540.2,288.4 543.1,291.6 546.0,288.4" fill="none" stroke="#e3a232" stroke-width="0.95" opacity="0.95"/>
<polyline points="529.4,272.0 526.2,274.8 529.4,277.7 526.2,280.5 529.4,283.4 526.2,286.2 529.4,289.1 526.2,291.9 529.4,294.8 526.2,297.6 529.4,300.5 526.2,303.3 529.4,306.2 526.2,309.0" fill="none" stroke="#e3a232" stroke-width="0.95" opacity="0.95"/>
<polyline points="632.0,288.4 634.9,291.6 637.7,288.4 640.6,291.6 643.5,288.4 646.3,291.6 649.2,288.4 652.1,291.6 655.0,288.4 657.8,291.6 660.7,288.4 663.6,291.6 666.4,288.4 669.3,291.6 672.2,288.4 675.0,291.6 677.9,288.4 680.8,291.6 683.7,288.4 686.5,291.6 689.4,288.4 692.3,291.6 695.1,288.4 698.0,291.6" fill="none" stroke="#e3a232" stroke-width="0.95" opacity="0.95"/>
<polyline points="745.6,180.0 742.4,182.9 745.6,185.8 742.4,188.7 745.6,191.7 742.4,194.6 745.6,197.5 742.4,200.4 745.6,203.3 742.4,206.2 745.6,209.1 742.4,212.0 745.6,215.0 742.4,217.9 745.6,220.8 742.4,223.7 745.6,226.6 742.4,229.5 745.6,232.4 742.4,235.3 745.6,238.3 742.4,241.2 745.6,244.1 742.4,247.0" fill="none" stroke="#e3a232" stroke-width="0.95" opacity="0.95"/>
<polyline points="905.6,488.0 902.4,491.0 905.6,494.0 902.4,497.0 905.6,500.0 902.4,503.0 905.6,506.0 902.4,509.0 905.6,512.0 902.4,515.0 905.6,518.0 902.4,521.0 905.6,524.0 902.4,527.0 905.6,530.0" fill="none" stroke="#e3a232" stroke-width="0.95" opacity="0.95"/>
<polyline points="930.1,518.0 926.9,521.0 930.1,523.9 926.9,526.9 930.1,529.8 926.9,532.8 930.1,535.7 926.9,538.7 930.1,541.7 926.9,544.6 930.1,547.6 926.9,550.5 930.1,553.5 926.9,556.4 930.1,559.4 926.9,562.3 930.1,565.3 926.9,568.3 930.1,571.2 926.9,574.2 930.1,577.1 926.9,580.1 930.1,583.0 926.9,586.0" fill="none" stroke="#e3a232" stroke-width="0.95" opacity="0.95"/>
<polyline points="905.6,647.0 902.4,650.0 905.6,653.0 902.4,656.0 905.6,659.0 902.4,662.0 905.6,665.0 902.4,668.0 905.6,671.0 902.4,674.0 905.6,677.0" fill="none" stroke="#e3a232" stroke-width="0.95" opacity="0.95"/>
<rect x="20" y="214.8" width="31.1" height="92.39999999999998" fill="#ffffb0" stroke="#800000" stroke-width="1.2"/>
<polyline points="45.0,257.4 48.0,260.6 50.9,257.4 53.9,260.6 56.8,257.4 59.8,260.6 62.8,257.4 65.7,260.6 68.7,257.4 71.6,260.6 74.6,257.4 77.5,260.6 80.5,257.4 83.5,260.6 86.4,257.4 89.4,260.6 92.3,257.4 95.3,260.6 98.2,257.4 101.2,260.6 104.2,257.4 107.1,260.6 110.1,257.4 113.0,260.6 116.0,257.4" fill="none" stroke="#e3a232" stroke-width="0.95" opacity="0.95"/>
<polyline points="45.0,288.4 47.9,291.6 50.7,288.4 53.6,291.6 56.5,288.4 59.3,291.6 62.2,288.4 65.1,291.6 68.0,288.4 70.8,291.6 73.7,288.4 76.6,291.6 79.4,288.4 82.3,291.6 85.2,288.4 88.0,291.6 90.9,288.4 93.8,291.6 96.7,288.4 99.5,291.6 102.4,288.4 105.3,291.6 108.1,288.4 111.0,291.6" fill="none" stroke="#e3a232" stroke-width="0.95" opacity="0.95"/>
<polyline points="51.6,245.6 111.7,245.6" fill="none" stroke="#000000" stroke-width="3" stroke-linecap="butt" stroke-linejoin="miter"/>
<polyline points="51.6,276.4 111.7,276.4" fill="none" stroke="#000000" stroke-width="3" stroke-linecap="butt" stroke-linejoin="miter"/>
<polyline points="113.2,100 113.2,247.1" fill="none" stroke="#000070" stroke-width="3" stroke-linecap="butt" stroke-linejoin="miter"/>
<polyline points="113.2,274.9 113.2,399.6 204.6,399.6" fill="none" stroke="#000070" stroke-width="3" stroke-linecap="butt" stroke-linejoin="miter"/>
<polyline points="116.4,108.0 113.6,111.0 116.4,114.0 113.6,117.0 116.4,120.0 113.6,123.0 116.4,125.9 113.6,128.9 116.4,131.9 113.6,134.9 116.4,137.9 113.6,140.9 116.4,143.9 113.6,146.9 116.4,149.9 113.6,152.9 116.4,155.9 113.6,158.9 116.4,161.8 113.6,164.8 116.4,167.8 113.6,170.8 116.4,173.8 113.6,176.8 116.4,179.8 113.6,182.8 116.4,185.8 113.6,188.8 116.4,191.8 113.6,194.7 116.4,197.7 113.6,200.7 116.4,203.7 113.6,206.7 116.4,209.7 113.6,212.7 116.4,215.7 113.6,218.7 116.4,221.7 113.6,224.7 116.4,227.7 113.6,230.6 116.4,233.6 113.6,236.6 116.4,239.6 113.6,242.6 116.4,245.6" fill="none" stroke="#e8b070" stroke-width="1" opacity="0.95"/>
<polyline points="116.4,276.4 113.6,279.4 116.4,282.4 113.6,285.4 116.4,288.4 113.6,291.4 116.4,294.4 113.6,297.4 116.4,300.4 113.6,303.4 116.4,306.4 113.6,309.5 116.4,312.5 113.6,315.5 116.4,318.5 113.6,321.5 116.4,324.5 113.6,327.5 116.4,330.5 113.6,333.5 116.4,336.5 113.6,339.5 116.4,342.5 113.6,345.5 116.4,348.5 113.6,351.5 116.4,354.5 113.6,357.5 116.4,360.5 113.6,363.5 116.4,366.5 113.6,369.6 116.4,372.6 113.6,375.6 116.4,378.6 113.6,381.6 116.4,384.6 113.6,387.6 116.4,390.6 113.6,393.6 116.4,396.6 113.6,399.6" fill="none" stroke="#e8b070" stroke-width="1" opacity="0.95"/>
<polyline points="113.2,400.0 116.2,402.8 119.2,400.0 122.1,402.8 125.1,400.0 128.1,402.8 131.1,400.0 134.1,402.8 137.0,400.0 140.0,402.8 143.0,400.0 146.0,402.8 149.0,400.0 151.9,402.8 154.9,400.0 157.9,402.8 160.9,400.0 163.9,402.8 166.9,400.0 169.8,402.8 172.8,400.0 175.8,402.8 178.8,400.0 181.8,402.8 184.7,400.0 187.7,402.8 190.7,400.0 193.7,402.8 196.7,400.0 199.6,402.8 202.6,400.0 205.6,402.8" fill="none" stroke="#e8b070" stroke-width="1" opacity="0.95"/>
<polyline points="205.6,401.1 205.6,368.8" fill="none" stroke="#000000" stroke-width="3" stroke-linecap="butt" stroke-linejoin="miter"/>
<polyline points="205.6,368.8 205.6,356" fill="none" stroke="#0000ff" stroke-width="3" stroke-linecap="butt" stroke-linejoin="miter"/>
<polyline points="205.6,356 200.6,353.4 210.6,348.6 200.6,342.8 210.6,336 200.6,329 210.6,322.6 205.6,320" fill="none" stroke="#0000ff" stroke-width="3" stroke-linecap="round" stroke-linejoin="miter"/>
<polyline points="205.6,320 205.6,307.2" fill="none" stroke="#0000ff" stroke-width="3" stroke-linecap="butt" stroke-linejoin="miter"/>
<polyline points="205.6,307.2 205.6,276.4 236.4,276.4" fill="none" stroke="#000000" stroke-width="3" stroke-linecap="butt" stroke-linejoin="miter"/>
<polyline points="236.4,276.4 276.5,276.4 276.5,214.8 236.4,214.8" fill="none" stroke="#0000ff" stroke-width="3" stroke-linecap="butt" stroke-linejoin="miter"/>
<polyline points="205.6,100 205.6,122.4" fill="none" stroke="#000000" stroke-width="3" stroke-linecap="butt" stroke-linejoin="miter"/>
<polygon points="174.8,122.4 236.4,122.4 205.6,153.2" fill="#0000ff" stroke="#0000ff" stroke-width="2.5" stroke-linejoin="miter"/>
<polyline points="173.3,153.2 237.9,153.2" fill="none" stroke="#0000ff" stroke-width="3" stroke-linecap="butt" stroke-linejoin="miter"/>
<polyline points="205.6,154.7 205.6,214.8 236.4,214.8" fill="none" stroke="#000000" stroke-width="3" stroke-linecap="butt" stroke-linejoin="miter"/>
<text x="232.5" y="185.6" fill="#000080" font-family="Liberation Serif" font-size="26.5">PC1</text>
<polyline points="248,152.5 262.2093060420842,166.40698038161432" fill="none" stroke="#0000ff" stroke-width="3.2" stroke-linecap="round" stroke-linejoin="miter"/>
<polygon points="271.5,175.5 258.3,170.4 266.1,162.4" fill="#0000ff" stroke="#0000ff" stroke-width="1.5" stroke-linejoin="round"/>
<polyline points="235.5,165 249.3076118445749,178.8076118445749" fill="none" stroke="#0000ff" stroke-width="3.2" stroke-linecap="round" stroke-linejoin="miter"/>
<polygon points="258.5,188.0 245.3,182.8 253.3,174.8" fill="#0000ff" stroke="#0000ff" stroke-width="1.5" stroke-linejoin="round"/>
<rect x="242.4" y="196.3" width="234.4" height="98.19999999999999" fill="none" stroke="#0000ff" stroke-width="3"/>
<polygon points="251.5,230.5 301.5,230.5 276.5,255" fill="#0000ff" stroke="#0000ff" stroke-width="2" stroke-linejoin="miter"/>
<polyline points="252.5,259.3 300,259.3" fill="none" stroke="#0000ff" stroke-width="6" stroke-linecap="round" stroke-linejoin="miter"/>
<polyline points="313,239.5 330.5,222" fill="none" stroke="#0000ff" stroke-width="2.6" stroke-linecap="round" stroke-linejoin="miter"/>
<polygon points="332.5,220 322.5,220.5 332.0,230" fill="#0000ff" stroke="#0000ff" stroke-width="1" stroke-linejoin="round"/>
<polyline points="313,255 330.5,237.5" fill="none" stroke="#0000ff" stroke-width="2.6" stroke-linecap="round" stroke-linejoin="miter"/>
<polygon points="332.5,235.5 322.5,236.0 332.0,245.5" fill="#0000ff" stroke="#0000ff" stroke-width="1" stroke-linejoin="round"/>
<polyline points="411,225.5 411,265.5" fill="none" stroke="#0000ff" stroke-width="6" stroke-linecap="round" stroke-linejoin="miter"/>
<polyline points="413,229 431,214.8 476.8,214.8" fill="none" stroke="#0000ff" stroke-width="3" stroke-linecap="butt" stroke-linejoin="miter"/>
<polyline points="413,257.5 433,276.4 476.8,276.4" fill="none" stroke="#0000ff" stroke-width="3" stroke-linecap="butt" stroke-linejoin="miter"/>
<polygon points="433.5,277.5 421,273.5 431,262.5" fill="#0000ff" stroke="#0000ff" stroke-width="1.5" stroke-linejoin="round"/>
<polyline points="476.8,214.8 484.3,214.8" fill="none" stroke="#0000ff" stroke-width="3" stroke-linecap="butt" stroke-linejoin="miter"/>
<polyline points="476.8,276.4 484.3,276.4" fill="none" stroke="#0000ff" stroke-width="3" stroke-linecap="butt" stroke-linejoin="miter"/>
<polyline points="484.3,214.8 515.1,214.8" fill="none" stroke="#000000" stroke-width="3" stroke-linecap="butt" stroke-linejoin="miter"/>
<polyline points="484.3,276.4 544.4,276.4" fill="none" stroke="#000000" stroke-width="3" stroke-linecap="butt" stroke-linejoin="miter"/>
<polyline points="513.6,100 513.6,216.3" fill="none" stroke="#00008c" stroke-width="3" stroke-linecap="butt" stroke-linejoin="miter"/>
<polyline points="544.4,276.4 557,276.4" fill="none" stroke="#0000ff" stroke-width="3" stroke-linecap="butt" stroke-linejoin="miter"/>
<polyline points="557,276.4 560.3,271.4 565.8,281.4 571.6,271.4 577.8,281.4 584,271.4 590,281.4 595,276.4" fill="none" stroke="#0000ff" stroke-width="3" stroke-linecap="round" stroke-linejoin="miter"/>
<polyline points="595,276.4 607.5,276.4" fill="none" stroke="#0000ff" stroke-width="3" stroke-linecap="butt" stroke-linejoin="miter"/>
<polyline points="607.5,276.4 698.4,276.4" fill="none" stroke="#000000" stroke-width="3" stroke-linecap="butt" stroke-linejoin="miter"/>
<polyline points="513.6,276.4 513.6,307.2" fill="none" stroke="#000000" stroke-width="3" stroke-linecap="butt" stroke-linejoin="miter"/>
<polyline points="513.6,307.2 513.6,320" fill="none" stroke="#0000ff" stroke-width="3" stroke-linecap="butt" stroke-linejoin="miter"/>
<polyline points="513.6,320 518.6,322.6 508.6,329 518.6,336.2 508.6,342.6 518.6,348.2 508.6,353.4 513.6,356.2" fill="none" stroke="#0000ff" stroke-width="3" stroke-linecap="round" stroke-linejoin="miter"/>
<polyline points="513.6,356.2 513.6,368.8" fill="none" stroke="#0000ff" stroke-width="3" stroke-linecap="butt" stroke-linejoin="miter"/>
<polyline points="513.6,368.8 513.6,399.6" fill="none" stroke="#000000" stroke-width="3" stroke-linecap="butt" stroke-linejoin="miter"/>
<polyline points="513.6,399.6 513.6,430.4" fill="none" stroke="#800000" stroke-width="3" stroke-linecap="butt" stroke-linejoin="miter"/>
<polyline points="484,430.4 544,430.4" fill="none" stroke="#800000" stroke-width="3" stroke-linecap="round" stroke-linejoin="miter"/>
<circle cx="513.6" cy="276.4" r="5.6" fill="#000080"/>
<polyline points="698.4,247.5 698.4,305" fill="none" stroke="#0000ff" stroke-width="3" stroke-linecap="round" stroke-linejoin="miter"/>
<polyline points="698.4,266.3 729.2,244.5" fill="none" stroke="#0000ff" stroke-width="3" stroke-linecap="round" stroke-linejoin="miter"/>
<polyline points="698.4,286.3 723.2,303" fill="none" stroke="#0000ff" stroke-width="3" stroke-linecap="round" stroke-linejoin="miter"/>
<polygon points="729.7,307.7 711.2,304.2 720.2,291.2" fill="#0000ff" stroke="#0000ff" stroke-width="1.5" stroke-linejoin="round"/>
<polyline points="729.2,244.5 729.2,184.0" fill="none" stroke="#000000" stroke-width="3" stroke-linecap="butt" stroke-linejoin="miter"/>
<polyline points="729.2,184.0 729.2,100" fill="none" stroke="#000070" stroke-width="3" stroke-linecap="butt" stroke-linejoin="miter"/>
<polyline points="732.4,108.0 729.6,111.0 732.4,114.1 729.6,117.1 732.4,120.2 729.6,123.2 732.4,126.2 729.6,129.3 732.4,132.3 729.6,135.4 732.4,138.4 729.6,141.4 732.4,144.5 729.6,147.5 732.4,150.6 729.6,153.6 732.4,156.6 729.6,159.7 732.4,162.7 729.6,165.8 732.4,168.8 729.6,171.8 732.4,174.9 729.6,177.9 732.4,181.0 729.6,184.0" fill="none" stroke="#e8b070" stroke-width="1" opacity="0.95"/>
<polyline points="729.2,307.2 729.2,368.8" fill="none" stroke="#000000" stroke-width="3" stroke-linecap="butt" stroke-linejoin="miter"/>
<polyline points="729.2,368.8 729.2,399.6" fill="none" stroke="#800000" stroke-width="3" stroke-linecap="butt" stroke-linejoin="miter"/>
<polyline points="698.5,399.6 760.8,399.6" fill="none" stroke="#800000" stroke-width="3" stroke-linecap="round" stroke-linejoin="miter"/>
<polyline points="708.5,409.3 751.5,409.3" fill="none" stroke="#800000" stroke-width="3" stroke-linecap="round" stroke-linejoin="miter"/>
<polyline points="717.3,418.3 742.8,418.3" fill="none" stroke="#800000" stroke-width="3" stroke-linecap="round" stroke-linejoin="miter"/>
<polyline points="725.5,427 733.3,427" fill="none" stroke="#800000" stroke-width="3" stroke-linecap="round" stroke-linejoin="miter"/>
<polyline points="900,368.8 930,368.8" fill="none" stroke="#800000" stroke-width="3" stroke-linecap="round" stroke-linejoin="miter"/>
<polyline points="914.5,368.8 914.5,399.6" fill="none" stroke="#800000" stroke-width="3" stroke-linecap="butt" stroke-linejoin="miter"/>
<polyline points="914.5,399.6 914.5,430.4" fill="none" stroke="#000000" stroke-width="3" stroke-linecap="butt" stroke-linejoin="miter"/>
<polyline points="914.5,430.4 914.5,442.5" fill="none" stroke="#0000ff" stroke-width="3" stroke-linecap="butt" stroke-linejoin="miter"/>
<polyline points="914.5,442.5 919.5,445.3 909.5,452.8 919.5,458.8 909.5,465 919.5,470.3 909.5,476 914.5,480" fill="none" stroke="#0000ff" stroke-width="3" stroke-linecap="round" stroke-linejoin="miter"/>
<polyline points="914.5,480 914.5,492.0" fill="none" stroke="#0000ff" stroke-width="3" stroke-linecap="butt" stroke-linejoin="miter"/>
<polyline points="914.5,492.0 914.5,584.4" fill="none" stroke="#000000" stroke-width="3" stroke-linecap="butt" stroke-linejoin="miter"/>
<polyline points="914.5,583.9 883.2,606" fill="none" stroke="#0000ff" stroke-width="3" stroke-linecap="round" stroke-linejoin="miter"/>
<polyline points="914.5,646.0 914.5,680" fill="none" stroke="#000000" stroke-width="3" stroke-linecap="butt" stroke-linejoin="miter"/>
<polygon points="915.0,646.5 896.5,643.0 905.5,630.0" fill="#0000ff" stroke="#0000ff" stroke-width="1.5" stroke-linejoin="round"/>
<polyline points="883.2,625 908.5,642" fill="none" stroke="#0000ff" stroke-width="3" stroke-linecap="round" stroke-linejoin="miter"/>
<text x="274" y="172.9" fill="#000080" font-family="Liberation Serif" font-size="26.5" letter-spacing="0">LED0</text>
<text x="214" y="328" fill="#000080" font-family="Liberation Serif" font-size="26.5" letter-spacing="0">R2</text>
<text x="213.6" y="358" fill="#000080" font-family="Liberation Serif" font-size="26.5" letter-spacing="0.5">270</text>
<text x="541" y="259.8" fill="#000080" font-family="Liberation Serif" font-size="26.5" letter-spacing="0">R1</text>
<text x="541" y="308.6" fill="#000080" font-family="Liberation Serif" font-size="26.5" letter-spacing="0.5">270</text>
<text x="523.5" y="327.9" fill="#000080" font-family="Liberation Serif" font-size="26.5" letter-spacing="0">R3</text>
<text x="522.8" y="388.8" fill="#000080" font-family="Liberation Serif" font-size="26.5" letter-spacing="0.9">3.3K</text>
<text x="633.5" y="117.5" fill="#000080" font-family="Liberation Serif" font-size="26.5" letter-spacing="0">FR201</text>
<text x="737.8" y="266" fill="#000080" font-family="Liberation Serif" font-size="26.5" letter-spacing="0">Q1</text>
<text x="892.6" y="361.3" fill="#800000" font-family="Liberation Serif" font-size="26.5" letter-spacing="0">12V</text>
<text x="923.5" y="450.8" fill="#000080" font-family="Liberation Serif" font-size="26.5" letter-spacing="0">R4</text>
<text x="923" y="512.8" fill="#000080" font-family="Liberation Serif" font-size="26.5" letter-spacing="0.9">220</text>
<text x="923" y="605" fill="#000080" font-family="Liberation Serif" font-size="26.5" letter-spacing="0">Q2</text>
<rect x="589" y="281" width="44" height="30" fill="#ffffe1"/><path d="M589.5 310.5 H632.5 V281.5" fill="none" stroke="#77775f" stroke-width="1"/><path d="M589.5 310.5 V281.5 H632.5" fill="none" stroke="#ecebd0" stroke-width="1"/>
<text x="592" y="293" fill="#222" font-family="Liberation Sans" font-size="11" letter-spacing="-0.25">Part R1</text>
<text x="592" y="305.5" fill="#222" font-family="Liberation Sans" font-size="11" letter-spacing="-0.25">Res1</text>
</svg>
</div>
<div id="vscroll"></div>
<div class="sbtn" style="left:980px;top:109px"><svg class="abs" style="left:0;top:0" width="13" height="13" viewBox="0 0 13 13"><path d="M2.5 8.5 L6.5 4.5 L10.5 8.5" stroke="#3a4f8c" stroke-width="2.2" fill="none"/></svg></div>
<div class="sbtn" style="left:980px;top:661px"><svg class="abs" style="left:0;top:0" width="13" height="13" viewBox="0 0 13 13"><path d="M2.5 4.5 L6.5 8.5 L10.5 4.5" stroke="#3a4f8c" stroke-width="2.2" fill="none"/></svg></div>
<div class="abs" style="left:980px;top:271px;width:16px;height:119px;border:1px solid #fff;border-radius:2px;background:linear-gradient(to right,#b9c9f6 0,#c9d8fc 50%,#b7c8f5 100%);box-shadow:1px 1px 0 #98a4c4"></div>
<div class="abs" style="left:984px;top:326px;width:7px;height:1px;background:#eef3ff;box-shadow:0 2px 0 #eef3ff,0 4px 0 #eef3ff,0 6px 0 #eef3ff,0 1px 0 #9fb0de,0 3px 0 #9fb0de,0 5px 0 #9fb0de,0 7px 0 #9fb0de"></div>
<div id="hscroll"></div>
<div class="sbtn" style="left:28.5px;top:678.5px;width:14.5px;height:14.5px"><svg class="abs" style="left:0;top:0" width="13" height="13" viewBox="0 0 13 13"><path d="M8.5 2.5 L4.5 6.5 L8.5 10.5" stroke="#3a4f8c" stroke-width="2.2" fill="none"/></svg></div>
<div class="sbtn" style="left:962.5px;top:678px;width:14.5px;height:14.5px"><svg class="abs" style="left:0;top:0" width="13" height="13" viewBox="0 0 13 13"><path d="M4.5 2.5 L8.5 6.5 L4.5 10.5" stroke="#3a4f8c" stroke-width="2.2" fill="none"/></svg></div>

<!-- BOTTOM -->
<div class="abs" style="left:0;top:694px;width:1024px;height:21px;background:#ece9d8"></div>
<svg class="abs" style="left:28px;top:693px" width="20" height="22" viewBox="0 0 20 22"><path d="M8 0 L13 21 H20" stroke="#111" stroke-width="1.1" fill="none"/><rect x="15" y="8" width="3" height="8" fill="#111"/></svg>
<div class="pbtn" style="left:895px;top:694px;width:66px;height:20px"><span class="abs" style="left:5px;top:3px;letter-spacing:-0.05px">Mask Level</span></div>
<div class="pbtn" style="left:961px;top:694px;width:35px;height:20px"><span class="abs" style="left:5px;top:3px;letter-spacing:-0.1px">Clear</span></div>
<div class="abs" style="left:0;top:714px;width:1024px;height:1px;background:#77756a"></div>
<div id="statusbar"><span class="abs" style="left:4.5px;top:4px;font-size:11px;white-space:pre;letter-spacing:0px;color:#222">X:321 Y:</span>
<div class="pbtn" style="left:890px;top:3px;width:38px;height:17px;color:#66645a"><span class="abs" style="left:6px;top:1px"><u>H</u>elp</span></div>
<div class="pbtn" style="left:928px;top:3px;width:70px;height:17px;color:#66645a"><span class="abs" style="left:7px;top:1px;letter-spacing:-0.3px"><u>I</u>nstruments</span></div>
<div class="pbtn" style="left:1002px;top:3px;width:18px;height:17px;color:#a5a396"><span class="abs" style="left:2px;top:1px">&gt;&gt;</span></div>
</div>
<div id="taskbar"></div>
<div id="start"><svg class="abs" style="left:10px;top:5px" width="20" height="19" viewBox="0 0 20 19"><path d="M1 3 Q5 0 9 3 L8 9 Q4 6 0 9 Z" fill="#e8562c"/><path d="M10.5 3.5 Q14 6 18.5 3.5 L17.5 9.5 Q13 12 9.5 9.5 Z" fill="#7cc242"/><path d="M0 10.5 Q4 7.5 8 10.5 L7 16.5 Q3 13.5 -1 16.5 Z" fill="#4a86e8"/><path d="M9.3 11 Q13 13.5 17.3 11 L16.3 17 Q12 19.5 8.3 17 Z" fill="#f4c430"/></svg><span class="abs" style="left:35px;top:4px;color:#fff;font-weight:bold;font-style:italic;font-size:17px;text-shadow:1px 1px 1px #1a4a1a">start</span></div>
<div id="tray">
<svg class="abs" style="left:17px;top:7px" width="16" height="16" viewBox="0 0 16 16"><rect x="0" y="0" width="13" height="13" fill="#d8242c"/><path d="M3 1 V12 M4 7 L10 1 M5 6 L11 12" stroke="#fff" stroke-width="2.2" fill="none"/><path d="M10 7 L15.5 15.5 H4.5 Z" fill="#f8d838" stroke="#7a5a00" stroke-width=".8"/><rect x="9.5" y="10" width="1.2" height="3" fill="#222"/></svg>
<svg class="abs" style="left:33px;top:6px" width="18" height="18" viewBox="0 0 18 18"><circle cx="10.5" cy="6.5" r="5.8" fill="#2d62c4" stroke="#1c3f8c" stroke-width=".6"/><path d="M7.5 2.5 Q10.5 1.5 12.5 4 Q11 7.5 8 6.5 Z" fill="#6cc04a"/><path d="M12 7 Q14.5 6.5 15 9 Q13 10 12 9 Z" fill="#6cc04a"/><path d="M0.5 9 Q5 8 7 11 L10 9.5 L9 16 L3 14.5 L5.5 13 Q4 10.5 0.5 9 Z" fill="#2f9a2f" stroke="#1a6a1a" stroke-width=".6"/></svg>
<div class="abs" style="left:52px;top:7px;width:16px;height:16px;background:#0a0ac8;border:1px solid #000060"><svg class="abs" style="left:3px;top:2px" width="9" height="10" viewBox="0 0 9 10"><path d="M0.5 0 L8.5 5 L0.5 10 Z" fill="#fff"/></svg></div>
<span class="abs" style="left:78px;top:8px;color:#fff;font-size:11px;white-space:pre;letter-spacing:-0.3px">4:29 PM</span>
</div>

<!-- MESSAGES PANEL -->
<div id="msg">
  <div id="msgtitle"><span>Messages</span><svg class="abs" style="left:822px;top:4px" width="28" height="8" viewBox="0 0 28 8"><path d="M0.6 0.8 H10.3 L5.45 6.1 Z" fill="#fff"/><path d="M17.5 0.7 L24.7 7 M24.7 0.7 L17.5 7" stroke="#fff" stroke-width="1.8"/></svg></div>
  <div class="ml"></div><div class="ml2"></div><div class="mr"></div><div class="mr2"></div>
  <div id="list">
<div id="lhead">
<div class="hc" style="left:0px;width:85.5px">Class</div>
<div class="hc" style="left:85.5px;width:99.5px">Document<svg class="abs" style="left:85px;top:4px" width="9" height="9" viewBox="0 0 9 9"><path d="M0.5 8 L4 1" stroke="#fff" stroke-width="1"/><path d="M4 1 L7.5 8 L0.5 8" stroke="#c9c6b5" stroke-width="1" fill="none"/></svg></div>
<div class="hc" style="left:185px;width:64.5px">Source</div>
<div class="hc" style="left:249.5px;width:419.25px">Message</div>
<div class="hc" style="left:668.75px;width:70.75px">Time</div>
<div class="hc" style="left:739.5px;width:71.0px">Date</div>
<div class="hc" style="left:810.5px;width:26.5px">No.</div>
</div>
<div class="row first" style="top:19px"><div class="ico"></div><div class="c" style="left:19px">[Error]</div><div class="c" style="left:89px">FET_RELAY.SCH...</div><div class="c" style="left:189px">Compiler</div><div class="c" style="left:252.5px">Signal PinSignal_1_1[0] has no driver</div><div class="c" style="left:671.5px">4:29:40 PM</div><div class="c d" style="left:742.5px">1/25/2011</div><div class="c" style="left:813.5px">1</div></div>
<div class="row" style="top:36px"><div class="ico"></div><div class="c" style="left:19px">[Error]</div><div class="c" style="left:89px">FET_RELAY.SCH...</div><div class="c" style="left:189px">Compiler</div><div class="c" style="left:252.5px">Signal PinSignal_1_2[0] has no driver</div><div class="c" style="left:671.5px">4:29:40 PM</div><div class="c d" style="left:742.5px">1/25/2011</div><div class="c" style="left:813.5px">2</div></div>
<div class="row" style="top:53px"><div class="ico"></div><div class="c" style="left:19px">[Error]</div><div class="c" style="left:89px">FET_RELAY.SCH...</div><div class="c" style="left:189px">Compiler</div><div class="c" style="left:252.5px">Signal PinSignal_2_1[0] has no driver</div><div class="c" style="left:671.5px">4:29:40 PM</div><div class="c d" style="left:742.5px">1/25/2011</div><div class="c" style="left:813.5px">3</div></div>
<div class="row" style="top:70px"><div class="ico"></div><div class="c" style="left:19px">[Error]</div><div class="c" style="left:89px">FET_RELAY.SCH...</div><div class="c" style="left:189px">Compiler</div><div class="c" style="left:252.5px">Signal PinSignal_2_2[0] has no driver</div><div class="c" style="left:671.5px">4:29:40 PM</div><div class="c d" style="left:742.5px">1/25/2011</div><div class="c" style="left:813.5px">4</div></div>
<div class="row" style="top:87px"><div class="ico"></div><div class="c" style="left:19px">[Error]</div><div class="c" style="left:89px">FET_RELAY.SCH...</div><div class="c" style="left:189px">Compiler</div><div class="c" style="left:252.5px">Signal PinSignal_D1_1[0] has no driver</div><div class="c" style="left:671.5px">4:29:40 PM</div><div class="c d" style="left:742.5px">1/25/2011</div><div class="c" style="left:813.5px">5</div></div>
<div class="row" style="top:104px"><div class="ico"></div><div class="c" style="left:19px">[Error]</div><div class="c" style="left:89px">FET_RELAY.SCH...</div><div class="c" style="left:189px">Compiler</div><div class="c" style="left:252.5px">Signal PinSignal_D2_1[0] has no driver</div><div class="c" style="left:671.5px">4:29:40 PM</div><div class="c d" style="left:742.5px">1/25/2011</div><div class="c" style="left:813.5px">6</div></div>
<div class="row" style="top:121px"><div class="ico"></div><div class="c" style="left:19px">[Error]</div><div class="c" style="left:89px">FET_RELAY.SCH...</div><div class="c" style="left:189px">Compiler</div><div class="c" style="left:252.5px">Signal PinSignal_DIR1_1[0] has no driver</div><div class="c" style="left:671.5px">4:29:40 PM</div><div class="c d" style="left:742.5px">1/25/2011</div><div class="c" style="left:813.5px">7</div></div>
<div class="row" style="top:138px"><div class="ico"></div><div class="c" style="left:19px">[Error]</div><div class="c" style="left:89px">FET_RELAY.SCH...</div><div class="c" style="left:189px">Compiler</div><div class="c" style="left:252.5px">Signal PinSignal_MOTOR1_1[0] has no driver</div><div class="c" style="left:671.5px">4:29:40 PM</div><div class="c d" style="left:742.5px">1/25/2011</div><div class="c" style="left:813.5px">8</div></div>
<div class="row" style="top:155px"><div class="ico"></div><div class="c" style="left:19px">[Error]</div><div class="c" style="left:89px">FET_RELAY.SCH...</div><div class="c" style="left:189px">Compiler</div><div class="c" style="left:252.5px">Signal PinSignal_MOTOR1_2[0] has no driver</div><div class="c" style="left:671.5px">4:29:40 PM</div><div class="c d" style="left:742.5px">1/25/2011</div><div class="c" style="left:813.5px">9</div></div>
<div class="row" style="top:172px"><div class="ico"></div><div class="c" style="left:19px">[Error]</div><div class="c" style="left:89px">FET_RELAY.SCH...</div><div class="c" style="left:189px">Compiler</div><div class="c" style="left:252.5px">Signal PinSignal_PC1_2[0] has no driver</div><div class="c" style="left:671.5px">4:29:40 PM</div><div class="c d" style="left:742.5px">1/25/2011</div><div class="c" style="left:813.5px">10</div></div>
<div class="row" style="top:189px"><div class="ico"></div><div class="c" style="left:19px">[Error]</div><div class="c" style="left:89px">FET_RELAY.SCH...</div><div class="c" style="left:189px">Compiler</div><div class="c" style="left:252.5px">Signal PinSignal_PC1_3[0] has no driver</div><div class="c" style="left:671.5px">4:29:40 PM</div><div class="c d" style="left:742.5px">1/25/2011</div><div class="c" style="left:813.5px">11</div></div>
<div class="row" style="top:206px"><div class="ico"></div><div class="c" style="left:19px">[Error]</div><div class="c" style="left:89px">FET_RELAY.SCH...</div><div class="c" style="left:189px">Compiler</div><div class="c" style="left:252.5px">Signal PinSignal_PC2_2[0] has no driver</div><div class="c" style="left:671.5px">4:29:40 PM</div><div class="c d" style="left:742.5px">1/25/2011</div><div class="c" style="left:813.5px">12</div></div>
<div class="row" style="top:223px"><div class="ico"></div><div class="c" style="left:19px">[Error]</div><div class="c" style="left:89px">FET_RELAY.SCH...</div><div class="c" style="left:189px">Compiler</div><div class="c" style="left:252.5px">Signal PinSignal_PC2_3[0] has no driver</div><div class="c" style="left:671.5px">4:29:40 PM</div><div class="c d" style="left:742.5px">1/25/2011</div><div class="c" style="left:813.5px">13</div></div>
<div class="row" style="top:240px"><div class="ico"></div><div class="c" style="left:19px">[Error]</div><div class="c" style="left:89px">FET_RELAY.SCH...</div><div class="c" style="left:189px">Compiler</div><div class="c" style="left:252.5px">Signal PinSignal_PWM1_1[0] has no driver</div><div class="c" style="left:671.5px">4:29:40 PM</div><div class="c d" style="left:742.5px">1/25/2011</div><div class="c" style="left:813.5px">14</div></div>
<div class="row" style="top:257px"><div class="ico"></div><div class="c" style="left:19px">[Error]</div><div class="c" style="left:89px">FET_RELAY.SCH...</div><div class="c" style="left:189px">Compiler</div><div class="c" style="left:252.5px">Signal PinSignal_Q1_2[0] has no driver</div><div class="c" style="left:671.5px">4:29:40 PM</div><div class="c d" style="left:742.5px">1/25/2011</div><div class="c" style="left:813.5px">15</div></div>
<div class="row" style="top:274px"><div class="ico"></div><div class="c" style="left:19px">[Error]</div><div class="c" style="left:89px">FET_RELAY.SCH...</div><div class="c" style="left:189px">Compiler</div><div class="c" style="left:252.5px">Signal PinSignal_Q2_1[0] has no driver</div><div class="c" style="left:671.5px">4:29:40 PM</div><div class="c d" style="left:742.5px">1/25/2011</div><div class="c" style="left:813.5px">16</div></div>
<div class="row" style="top:291px"><div class="ico"></div><div class="c" style="left:19px">[Error]</div><div class="c" style="left:89px">FET_RELAY.SCH...</div><div class="c" style="left:189px">Compiler</div><div class="c" style="left:252.5px">Signal PinSignal_Q2_2[0] has no driver</div><div class="c" style="left:671.5px">4:29:40 PM</div><div class="c d" style="left:742.5px">1/25/2011</div><div class="c" style="left:813.5px">17</div></div>
<div class="row" style="top:308px"><div class="ico"></div><div class="c" style="left:19px">[Error]</div><div class="c" style="left:89px">FET_RELAY.SCH...</div><div class="c" style="left:189px">Compiler</div><div class="c" style="left:252.5px">Signal PinSignal_Q2_3[0] has no driver</div><div class="c" style="left:671.5px">4:29:40 PM</div><div class="c d" style="left:742.5px">1/25/2011</div><div class="c" style="left:813.5px">18</div></div>
<div class="cl" style="left:85.5px;top:18px"></div>
<div class="cl" style="left:185px;top:18px"></div>
<div class="cl" style="left:249.5px;top:18px"></div>
<div class="cl" style="left:668.75px;top:18px"></div>
<div class="cl" style="left:739.5px;top:18px"></div>
<div class="cl" style="left:810.5px;top:18px"></div>
<div class="abs" style="left:17px;top:19px;width:820px;height:16px;border:1px dotted #222"></div>
</div>
</div>
</body>
</html>
